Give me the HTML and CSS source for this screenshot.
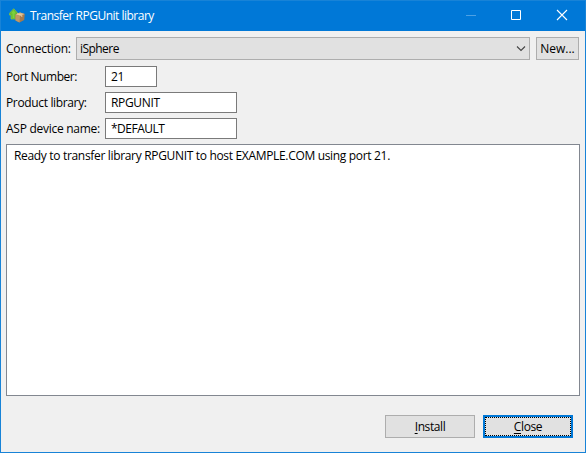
FILE: index.html
```html
<!DOCTYPE html>
<html lang="en">
<head>
<meta charset="utf-8">
<title>Transfer RPGUnit library</title>
<link rel="stylesheet" href="styles.css">
</head>
<body>
<div class="window">
  <header class="titlebar">
    <svg class="app-icon" width="16" height="16" viewBox="0 0 16 16">
      <path d="M4.700.7 9 5.5V7H7v4H2V7H.3V5.500Z" fill="#64b832" stroke="#8dc63f" stroke-width=".7"/>
      <path d="M4.500 2 7 5.500H5.500V10H3.500V5.500H2Z" fill="#7dd13c"/>
      <path d="M6.500 6.500 11 4.500 15.700 6 15.200 12 10.500 14.500 6.500 12.500Z" fill="#a77b4d"/>
      <path d="M6.500 6.500 11 4.500 15.700 6 11 8Z" fill="#d9b98b"/>
      <path d="M6.500 6.500 11 8 10.500 14.500 6.500 12.500Z" fill="#c09867"/>
      <path d="M8 5.700 12.800 7.200V9" fill="none" stroke="#eed7ae" stroke-width=".8"/>
    </svg>
    <h1 class="title"><span class="t-title">Transfer RPGUnit library</span></h1>
    <div class="controls">
      <svg class="control" width="46" height="30" viewBox="0 0 46 30"><path d="M18 14.500H28" stroke="#4da1e4"/></svg>
      <svg class="control" width="46" height="30" viewBox="0 0 46 30"><path d="M17.500 9.500H26.500V18.500H17.500Z" fill="none" stroke="#fff"/></svg>
      <svg class="control" width="46" height="30" viewBox="0 0 46 30"><path d="M17 9 27 19M27 9 17 19" stroke="#fff" stroke-width="1.1"/></svg>
    </div>
  </header>
  <main class="content">
    <div class="connection">
      <span class="label t-connection">Connection:</span>
      <div class="combo"><span class="t-sphere">iSphere</span>
        <svg width="10" height="7" viewBox="0 0 10 7"><path d="M1 1.500 5 5.500 9 1.500" fill="none" stroke="#444" stroke-width="1.1"/></svg>
      </div>
      <button class="button new"><span class="t-new">New...</span></button>
    </div>
    <div class="fields">
      <span class="label t-port">Port Number:</span><div class="field short"><span class="t-21">21</span></div>
      <span class="label t-product">Product library:</span><div class="field"><span class="t-rpg">RPGUNIT</span></div>
      <span class="label t-asp">ASP device name:</span><div class="field"><span class="t-default">*DEFAULT</span></div>
    </div>
    <div class="log"><span class="t-log">Ready to transfer library RPGUNIT to host EXAMPLE.COM using port 21.</span></div>
    <footer class="actions">
      <button class="button"><span class="t-install"><u>I</u>nstall</span></button>
      <button class="button primary"><span class="t-close"><u>C</u>lose</span></button>
    </footer>
  </main>
</div>
</body>
</html>
```
FILE: styles.css
```css
* { box-sizing: border-box; }
body { margin: 0; font: 12px/16px "Open Sans", "Noto Sans", sans-serif; color: #000; }
.window { width: 586px; height: 453px; border: 1px solid #1883d7; background: #f0f0f0; display: flex; flex-direction: column; overflow: hidden; white-space: nowrap; }
.titlebar { height: 30px; flex: none; background: #0078d7; color: #fff; display: flex; align-items: center; padding-left: 8px; }
.title { flex: 1; margin: 0 0 0 5px; font: inherit; }
.controls { display: flex; margin-right: -1px; }
.control { display: block; }
.content { flex: 1; display: flex; flex-direction: column; padding: 6px 5px 14px; }
.connection { display: flex; height: 23px; }
.label { align-self: center; }
.connection .label { width: 70px; }
.combo { width: 454px; border: 1px solid #adadad; background: #e1e1e1; display: flex; align-items: center; justify-content: space-between; padding: 0 3px; }
.button { font: inherit; color: inherit; width: 90px; height: 23px; padding: 0; border: 1px solid #adadad; background: #e1e1e1; }
.button.new { width: 43px; margin-left: 6px; }
.fields { display: grid; grid-template-columns: 94px 132px; column-gap: 5px; row-gap: 5px; grid-auto-rows: 21px; margin-top: 6px; }
.field { border: 1px solid #7a7a7a; background: #fff; padding: 2px 5px 0; }
.field.short { width: 52px; }
.log { height: 252px; margin-top: 5px; border: 1px solid #828790; background: #fff; padding: 3px 7px; }
.actions { display: flex; justify-content: flex-end; gap: 8px; padding-right: 7px; margin-top: 19px; }
.button.primary { border: 2px solid #0078d7; outline: 1px dotted #000; outline-offset: -3px; }
u { text-underline-offset: 2px; text-decoration-thickness: 1px; }

/* Tracking keeps the captions at dialog-font widths */
.t-title { letter-spacing: -0.5px; }
.t-connection { letter-spacing: -0.2px; }
.t-sphere { letter-spacing: -0.55px; }
.t-port { letter-spacing: -0.45px; }
.t-21 { letter-spacing: -0.4px; }
.t-product { letter-spacing: -0.35px; }
.t-asp { letter-spacing: -0.27px; }
.t-rpg { letter-spacing: -0.35px; }
.t-default { letter-spacing: -0.5px; }
.t-log { letter-spacing: -0.325px; }
.t-install, .t-close { letter-spacing: -0.4px; }
```
